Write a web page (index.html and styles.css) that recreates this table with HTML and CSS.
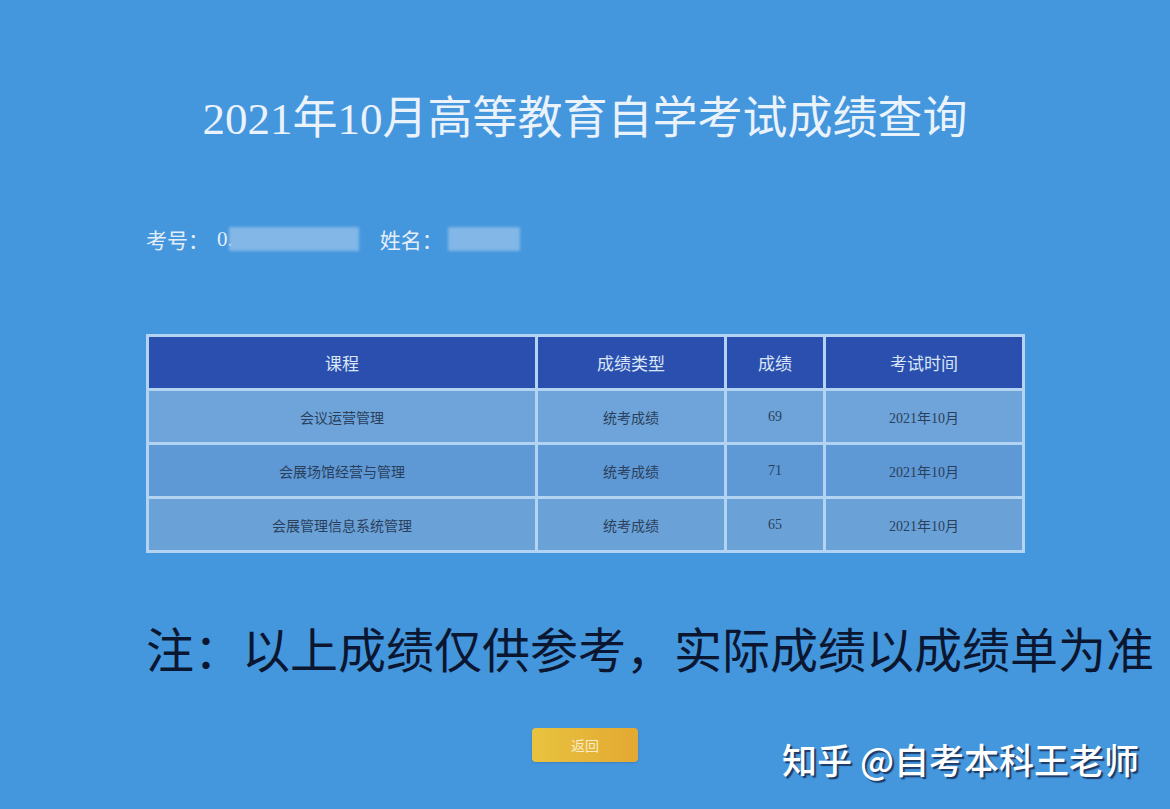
FILE: index.html
```html
<!DOCTYPE html>
<html lang="zh-CN">
<head>
<meta charset="utf-8">
<title>2021年10月高等教育自学考试成绩查询</title>
<link rel="stylesheet" href="styles.css">
</head>
<body>
<div class="page">
  <h1 class="title">2021年10月高等教育自学考试成绩查询</h1>
  <div class="info">
    <span class="label">考号：</span><span class="num">0.</span><span class="blur blur-id"></span>
    <span class="label label-name">姓名：</span><span class="blur blur-name"></span>
  </div>
  <table class="scores">
    <thead>
      <tr>
        <th class="c1">课程</th>
        <th class="c2">成绩类型</th>
        <th class="c3">成绩</th>
        <th class="c4">考试时间</th>
      </tr>
    </thead>
    <tbody>
      <tr class="r1">
        <td>会议运营管理</td>
        <td>统考成绩</td>
        <td class="serif">69</td>
        <td class="serif">2021年10月</td>
      </tr>
      <tr class="r2">
        <td>会展场馆经营与管理</td>
        <td>统考成绩</td>
        <td class="serif">71</td>
        <td class="serif">2021年10月</td>
      </tr>
      <tr class="r3">
        <td>会展管理信息系统管理</td>
        <td>统考成绩</td>
        <td class="serif">65</td>
        <td class="serif">2021年10月</td>
      </tr>
    </tbody>
  </table>
  <p class="note">注：以上成绩仅供参考，实际成绩以成绩单为准</p>
  <div class="actions"><button class="back">返回</button></div>
  <div class="watermark">知乎 @自考本科王老师</div>
</div>
</body>
</html>
```
FILE: styles.css
```css
html, body {
  margin: 0;
  padding: 0;
  background: #4496dd;
}
.page {
  position: relative;
  width: 1170px;
  height: 809px;
  overflow: hidden;
  background: #4496dd;
  font-family: "Noto Sans CJK SC", "Noto Sans", sans-serif;
}
.title {
  margin: 0;
  padding-top: 92px;
  text-align: center;
  font-family: "Liberation Serif", "Noto Sans CJK SC", serif;
  font-weight: 400;
  font-size: 45px;
  line-height: 54px;
  color: #eaf2fb;
}
.info {
  margin-top: 81px;
  padding-left: 146px;
  height: 24px;
  display: flex;
  align-items: center;
  font-size: 21px;
  line-height: 24px;
  color: #e4eef9;
}
.num {
  font-family: "Liberation Serif", serif;
  margin-left: 8px;
}
.blur {
  display: inline-block;
  height: 24px;
  background: #8ebde9;
  filter: blur(1.5px);
  opacity: 0.85;
}
.blur-id {
  width: 130px;
  margin-left: -4px;
}
.label-name {
  margin-left: 21px;
}
.blur-name {
  width: 72px;
  margin-left: 5px;
}
.scores {
  margin-top: 83px;
  margin-left: 146px;
  border-collapse: separate;
  border-spacing: 3px;
  background: #b3d3f3;
  table-layout: fixed;
}
.scores th,
.scores td {
  padding: 0;
  height: 51px;
  text-align: center;
  vertical-align: middle;
}
.scores th {
  background: #2b4fae;
  color: #d9e6f7;
  font-weight: 400;
  font-size: 17px;
}
.c1 { width: 386px; }
.c2 { width: 186px; }
.c3 { width: 96px; }
.c4 { width: 196px; }
.scores td {
  font-size: 14px;
  color: #2a3f5c;
}
.scores td.serif {
  font-family: "Liberation Serif", "Noto Sans CJK SC", serif;
}
.r1 td { background: #6ea4d9; }
.r2 td { background: #5e98d5; }
.r3 td { background: #6aa2d8; }
.note {
  margin: 66px 0 0 0;
  padding-left: 146px;
  font-size: 48px;
  line-height: 56px;
  font-weight: 400;
  color: #0b1630;
  white-space: nowrap;
}
.actions {
  margin-top: 53px;
  display: flex;
  justify-content: center;
}
.back {
  width: 106px;
  height: 34px;
  border: 0;
  border-radius: 4px;
  background: linear-gradient(90deg, #e8c33f, #e3a832);
  color: #f6ecc8;
  font-family: "Noto Sans CJK SC", sans-serif;
  font-size: 14px;
  padding: 0;
  box-shadow: 0 1px 2px rgba(40, 70, 120, 0.25);
}
.watermark {
  position: absolute;
  left: 782px;
  top: 735px;
  font-size: 35px;
  line-height: 48px;
  font-weight: 500;
  color: #ffffff;
  text-shadow: 2px 2px 1px #1d3a66;
  white-space: nowrap;
}
```
